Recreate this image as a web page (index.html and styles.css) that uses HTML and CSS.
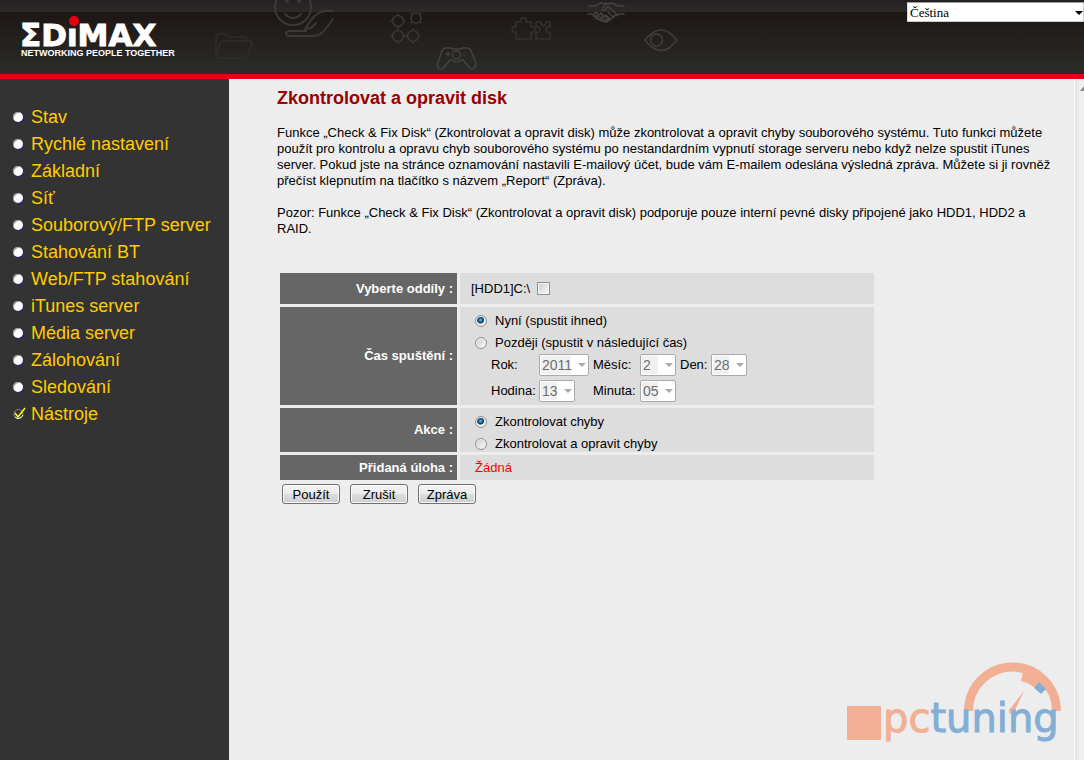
FILE: index.html
```html
<!DOCTYPE html>
<html lang="cs">
<head>
<meta charset="utf-8">
<title>Edimax – Zkontrolovat a opravit disk</title>
<link rel="stylesheet" href="styles.css">
</head>
<body>
<header class="header">
  <svg class="decor" width="700" height="74" viewBox="0 0 700 74" fill="none" stroke="#3a3735" stroke-width="1.5" stroke-linecap="round" stroke-linejoin="round" aria-hidden="true">
    <g stroke="#2f2e2d">
      <path d="M216 56V37q0-3 3-3h6l3 3h16q3 0 3 4M216 56l4-12q1-3 4-3h25q4 0 3 3l-4 11q-1 3-4 3h-25q-3 0-3-2"/>
    </g>
    <g stroke="#3b3837" stroke-width="2">
      <circle cx="293" cy="7" r="18"/>
      <path d="M285 14q8 8 16 0"/>
      <circle cx="287" cy="1" r="1" fill="#3b3837"/><circle cx="299" cy="1" r="1" fill="#3b3837"/>
      <path d="M333 11h-8q-8 1-14 9l-6 9M306 31h-16q-4 0-4 2.500t4 2.500h23q6 0 11-5l9-12M305 29l6-1 5-5"/>
    </g>
    <g>
      <circle cx="398" cy="21" r="5.500"/><circle cx="416" cy="18" r="5"/><circle cx="398" cy="36" r="5.500"/><circle cx="413" cy="36" r="5.500"/>
      <path d="M398 27v3M404 36h3M391 21h1M404 21h1M398 14v1M391 36h1M398 42v1M413 42v1M419 36h1M413 29v1M411 13l1 1M421 13l-1 1M411 23l1-1M421 23l-1-1"/>
    </g>
    <g stroke="#454342">
      <path d="M446 48q-3 0-4 3l-4 11q-2 6 2 7 3 0 5-3l5-6h2q5 4 9 0h2l5 6q3 4 6 2 3-2 1-7l-4-10q-1-3-4-3h-5l-1 1h-9l-1-1z"/>
      <circle cx="456.500" cy="55" r="4"/><path d="M448 52v4M446 54h4M465 52v.1M463 54v.1M467 54v.1M465 56v.1"/>
    </g>
    <g stroke="#353230">
      <path d="M516 39V32q-4 1-4-2.500t4-2.500v-5h5q-1-4 2.500-4t2.500 4h5v5q4-1 4 2.500t-4 2.500v7z"/>
      <path d="M536 39v-7q4 1 4-2.500t-4-2.500v-5h5q1 4 2.500 4t2.500-4h4v5q-4-1-4 2.500t4 2.500v7z"/>
    </g>
    <g stroke="#45413f">
      <path d="M589 6h6l6-3 6 1 5-1 6 3h6M588 14h5l4 5 10 3 7-6 4-2h6M606 3l-4 7q3 2 5-3l3 1 8 8M593 16l3-4 2 2-3 4M597 19l4-6 2 2-4 5M601 21l4-6 2 2-3 5M606 22l3-4M608 12l6 6M606 15l5 5"/>
    </g>
    <g stroke="#413f3d">
      <path d="M645 40q16-20 32 0-16 21-32 0z"/><circle cx="656.500" cy="40" r="6"/>
    </g>
  </svg>
  <svg class="logo" width="160" height="46" viewBox="0 0 160 46" role="img" aria-label="EDiMAX Networking People Together">
    <text class="logo-name" x="0" y="33">ΣDıMAX</text>
    <circle cx="54" cy="8" r="5" fill="#e60012"/>
    <text class="logo-tag" x="1" y="43">NETWORKING PEOPLE TOGETHER</text>
  </svg>
  <span class="picker language">
    <select aria-label="Jazyk"><option>Čeština</option></select>
  </span>
</header>

<div class="body">
  <nav class="sidebar">
    <ul class="menu">
      <li><a href="#">Stav</a></li>
      <li><a href="#">Rychlé nastavení</a></li>
      <li><a href="#">Základní</a></li>
      <li><a href="#">Síť</a></li>
      <li><a href="#">Souborový/FTP server</a></li>
      <li><a href="#">Stahování BT</a></li>
      <li><a href="#">Web/FTP stahování</a></li>
      <li><a href="#">iTunes server</a></li>
      <li><a href="#">Média server</a></li>
      <li><a href="#">Zálohování</a></li>
      <li><a href="#">Sledování</a></li>
      <li class="current"><a href="#" aria-current="page"><svg class="tick" width="14" height="14" viewBox="0 0 14 14" fill="none" aria-hidden="true"><circle cx="5.500" cy="7" r="4.500" stroke="#8a8a8a"/><path d="M2 10q4 4 8-2" stroke="#fff"/><path d="M2 6l3 4 7-9" stroke="#ff0" stroke-width="1.500"/></svg>Nástroje</a></li>
    </ul>
  </nav>

  <main class="content">
    <h1>Zkontrolovat a opravit disk</h1>
    <p>Funkce „Check &amp; Fix Disk“ (Zkontrolovat a opravit disk) může zkontrolovat a opravit chyby souborového systému. Tuto funkci můžete použít pro kontrolu a opravu chyb souborového systému po nestandardním vypnutí storage serveru nebo když nelze spustit iTunes server. Pokud jste na stránce oznamování nastavili E-mailový účet, bude vám E-mailem odeslána výsledná zpráva. Můžete si ji rovněž přečíst klepnutím na tlačítko s názvem „Report“ (Zpráva).</p>
    <p>Pozor: Funkce „Check &amp; Fix Disk“ (Zkontrolovat a opravit disk) podporuje pouze interní pevné disky připojené jako HDD1, HDD2 a RAID.</p>

    <form>
      <table class="settings">
        <tr class="row-partition">
          <th scope="row">Vyberte oddíly :</th>
          <td><label class="partition">[HDD1]C:\ <input type="checkbox"></label></td>
        </tr>
        <tr>
          <th scope="row">Čas spuštění :</th>
          <td>
            <div class="choices">
              <label><input type="radio" name="time" checked>Nyní (spustit ihned)</label>
              <label><input type="radio" name="time">Později (spustit v následující čas)</label>
            </div>
            <div class="date">
              <label for="year">Rok:</label><span class="picker wide"><select id="year" disabled><option>2011</option></select></span>
              <label for="month">Měsíc:</label><span class="picker"><select id="month" disabled><option>2</option></select></span>
              <label for="day">Den:</label><span class="picker"><select id="day" disabled><option>28</option></select></span>
              <label for="hour">Hodina:</label><span class="picker"><select id="hour" disabled><option>13</option></select></span>
              <label for="minute">Minuta:</label><span class="picker"><select id="minute" disabled><option>05</option></select></span>
            </div>
          </td>
        </tr>
        <tr>
          <th scope="row">Akce :</th>
          <td>
            <div class="choices">
              <label><input type="radio" name="action" checked>Zkontrolovat chyby</label>
              <label><input type="radio" name="action">Zkontrolovat a opravit chyby</label>
            </div>
          </td>
        </tr>
        <tr class="row-task">
          <th scope="row">Přidaná úloha :</th>
          <td class="none">Žádná</td>
        </tr>
      </table>
      <div class="buttons">
        <button type="button">Použít</button>
        <button type="button">Zrušit</button>
        <button type="button">Zpráva</button>
      </div>
    </form>
  </main>
  <div class="track"><svg width="10" height="6" viewBox="0 0 10 6" aria-hidden="true"><path d="M0 6L5 0l5 6z" fill="#888"/></svg></div>
</div>

<svg class="watermark" width="220" height="84" viewBox="0 0 220 84" role="img" aria-label="pctuning">
  <rect x="1" y="46" width="34" height="34" fill="#f1b094"/>
  <path d="M122.500 51a44 44 0 0 1 88 0" fill="none" stroke="#f1b094" stroke-width="9"/>
  <path d="M177 12l-2 9q8 2 14 7l11 2 5-6-12-12z" fill="#f1b094"/>
  <path d="M193 22l7 7-5 5-7-6z" fill="#84aed3"/>
  <path d="M178 31l-14 18 4 3z" fill="#f1b094"/>
  <circle cx="166" cy="51" r="3" fill="#f1b094"/>
  <text class="watermark-text" x="37" y="72"><tspan class="orange">pc</tspan><tspan class="blue">tuning</tspan></text>
</svg>
</body>
</html>
```
FILE: styles.css
```css
* { box-sizing: border-box; }
body {
  margin: 0;
  min-height: 100vh;
  display: flex;
  flex-direction: column;
  position: relative;
  background: #ededed;
  color: #000;
  font: 13px/16px "Liberation Sans", Arial, sans-serif;
}

.header {
  position: relative;
  display: flex;
  justify-content: space-between;
  align-items: flex-start;
  border-bottom: 5px solid #e60012;
  background: linear-gradient(#242021, #2f2a29) 0 0 / 100% 12px no-repeat, linear-gradient(#1a1311, #2b2c2a);
}
.decor { position: absolute; top: 0; left: 0; }
.logo { position: relative; margin: 13px 0 15px 20px; overflow: visible; }
.logo-name {
  font: bold 31px "DejaVu Sans", sans-serif;
  fill: #fff;
  stroke: #fff;
  stroke-width: 1px;
}
.logo-tag { font: bold 9px "Liberation Sans", Arial, sans-serif; fill: #fff; }

.picker { position: relative; display: inline-block; width: 36px; height: 22px; }
.picker.wide { width: 50px; }
.picker::after {
  content: "";
  position: absolute;
  right: 3px;
  top: 9px;
  border: 4px solid transparent;
  border-top-color: #aaa;
  border-bottom: 0;
}
.picker select {
  appearance: none;
  width: 100%;
  height: 100%;
  margin: 0;
  padding: 0 0 0 2px;
  border: 1px solid #aaa;
  border-radius: 2px;
  background: linear-gradient(#f0f0f0, #f0f0f0) 1px 1px / calc(100% - 18px) 18px no-repeat #fff;
  color: #6d6d6d;
  font: 14px "Liberation Sans", Arial, sans-serif;
  opacity: 1;
}
.picker.language { width: 177px; height: 20px; margin-top: 2px; }
.picker.language::after { right: 1px; border-top-color: #000; }
.picker.language select {
  border-color: #999 #ccc #ccc #ddd;
  border-radius: 0;
  background: #fff;
  color: #000;
  font: 13px "Liberation Serif", "Times New Roman", serif;
}

.body { flex: 1; display: flex; }
.sidebar { flex: 0 0 229px; background: #333; }
.menu { list-style: none; margin: 0; padding: 24px 0 0 13px; }
.menu a {
  display: flex;
  align-items: center;
  height: 27px;
  color: #fc0;
  font-size: 18px;
  text-decoration: none;
}
.menu a::before {
  content: "";
  width: 10px;
  height: 10px;
  margin-right: 8px;
  border-radius: 50%;
  background: #fff;
  box-shadow: inset 1px 1px 0 #999, 1px 1px 0 #22228a;
}
.menu .current a::before { display: none; }
.tick { margin-right: 4px; }

.content { flex: 1; padding: 8px 16px 32px 48px; }
h1 { margin: 0 0 16px; color: #900; font-size: 18px; line-height: 22px; }
p { margin: 0 0 16px; }

.settings {
  width: 600px;
  max-width: 100%;
  margin-top: 33px;
  border-spacing: 3px;
}
.settings th {
  width: 177px;
  padding: 0 4px 0 0;
  background: #666;
  color: #fff;
  text-align: right;
}
.settings td { padding: 6px 0 0 15px; background: #ddd; }
.settings .row-partition td { height: 31px; padding: 0 0 0 11px; }
.settings .row-task td { height: 25px; padding-top: 0; }
.settings .none { color: #f00; }
.partition { display: flex; align-items: center; gap: 7px; }
.choices { display: flex; flex-direction: column; gap: 6px; }
.choices label { display: flex; align-items: center; gap: 8px; }

input {
  appearance: none;
  width: 12px;
  height: 12px;
  margin: 0;
  border: 1px solid #8e8f8f;
  background: linear-gradient(135deg, #c8cdd2, #fafafa);
  box-shadow: inset 0 0 0 1px #f4f4f4;
}
input[type="checkbox"] { width: 13px; height: 13px; }
input[type="radio"] { border-radius: 50%; }
input[type="radio"]:checked {
  background: radial-gradient(circle at 45% 40%, #6cc9ee 0, #12608f 2px, #143450 3px, #e8e8e8 4px);
}

.date {
  display: grid;
  grid-template-columns: 48px 54px 47px 40px 31px auto;
  row-gap: 4px;
  justify-content: start;
  align-items: center;
  margin-top: 3px;
  padding: 0 0 3px 16px;
}

.buttons { display: flex; gap: 10px; margin: 1px 5px; }
button {
  min-width: 58px;
  height: 20px;
  padding: 0 7px;
  border: 1px solid #707070;
  border-radius: 3px;
  background: linear-gradient(#f4f4f4 0, #ebebeb 50%, #ddd 50%, #cfcfcf);
  box-shadow: inset 0 0 0 1px #fafafa;
  color: #000;
  font: 13px "Liberation Sans", Arial, sans-serif;
}

.track {
  flex: 0 0 10px;
  padding: 6px 0 0 5px;
  overflow: hidden;
  border-left: 1px solid #fbfbfb;
  background: linear-gradient(90deg, #e3e3e3, #efefef 4px);
}
.track svg { display: block; }

.watermark { position: absolute; right: 18px; bottom: 16px; }
.watermark-text { font: 40px "DejaVu Sans", sans-serif; }
.orange { fill: #f1b094; stroke: #f1b094; }
.blue { fill: #84aed3; stroke: #84aed3; }
```
